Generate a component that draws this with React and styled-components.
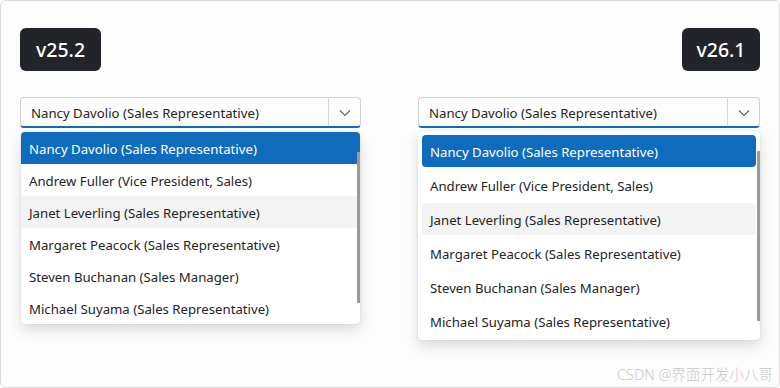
import React from 'react';
import styled, { createGlobalStyle, css } from 'styled-components';

const GlobalStyle = createGlobalStyle`
  html, body {
    margin: 0;
    padding: 0;
    background: #ffffff;
  }
  * {
    box-sizing: border-box;
  }
`;

const Frame = styled.div`
  position: relative;
  width: 780px;
  height: 388px;
  border: 1px solid #dcdcdc;
  border-radius: 6px;
  background: #fdfdfd;
  padding: 27px 19px 0;
  display: flex;
  justify-content: space-between;
  font-family: 'Noto Sans', 'Open Sans', sans-serif;
  color: #242424;
`;

const Column = styled.div`
  width: ${(p) => p.width}px;
  display: flex;
  flex-direction: column;
  align-items: ${(p) => (p.right ? 'flex-end' : 'flex-start')};
`;

const Badge = styled.div`
  height: 43px;
  padding: 0 ${(p) => p.pad}px;
  display: flex;
  align-items: center;
  border-radius: 6px;
  background: #212429;
  color: #ffffff;
  font-size: 19.5px;
  font-weight: 500;
  margin-bottom: 26px;
`;

const Select = styled.div`
  width: 100%;
  height: 31px;
  display: flex;
  border: 1px solid #d1d1d1;
  border-bottom: 2px solid #0f6cbd;
  border-radius: 4px;
  background: #fdfdfd;
`;

const SelectText = styled.div`
  flex: 1;
  display: flex;
  align-items: center;
  padding: 2px 0 0 10px;
  font-size: 13.2px;
`;

const Chevron = styled.div`
  width: 32px;
  border-left: 1px solid #d6d6d6;
  display: flex;
  align-items: center;
  justify-content: center;
  padding-top: 1px;
  color: #616161;
`;

const Panel = styled.div`
  position: relative;
  background: #ffffff;
  border-radius: 4px;
  box-shadow: 0 6px 14px rgba(0, 0, 0, 0.14), 0 0 2px rgba(0, 0, 0, 0.12);
  ${(p) =>
    p.modern
      ? css`
          width: 100%;
          margin-top: 3px;
          padding: 4px 4px 3px;
          display: flex;
          flex-direction: column;
          gap: 2px;
        `
      : css`
          width: calc(100% - 2px);
          margin: 4px 1px 0;
          overflow: hidden;
        `}
`;

const Item = styled.div`
  height: 32px;
  display: flex;
  align-items: center;
  padding: 1px 0 0 8px;
  font-size: 13.2px;
  color: #242424;
  ${(p) => p.modern && 'border-radius: 4px;'}
  ${(p) => p.hover && 'background: #f3f3f3;'}
  ${(p) =>
    p.selected &&
    css`
      background: #0f6cbd;
      color: #ffffff;
    `}
`;

const Thumb = styled.div`
  position: absolute;
  right: 0;
  width: 3px;
  top: ${(p) => p.top}px;
  height: ${(p) => p.size}px;
  background: #9a9a9a;
`;

const Watermark = styled.div`
  position: absolute;
  right: 6px;
  bottom: 3px;
  font-size: 14.5px;
  color: #c8c8c8;
  font-family: 'Noto Sans', 'Noto Sans CJK SC', sans-serif;
  font-weight: 300;
`;

const people = [
  'Nancy Davolio (Sales Representative)',
  'Andrew Fuller (Vice President, Sales)',
  'Janet Leverling (Sales Representative)',
  'Margaret Peacock (Sales Representative)',
  'Steven Buchanan (Sales Manager)',
  'Michael Suyama (Sales Representative)',
];

const ChevronIcon = () => (
  <svg width="12" height="8" viewBox="0 0 12 8" fill="none">
    <path d="M1 1.5 L6 6.5 L11 1.5" stroke="currentColor" strokeWidth="1.1" />
  </svg>
);

const ComboBox = ({ modern }) => (
  <>
    <Select>
      <SelectText>{people[0]}</SelectText>
      <Chevron>
        <ChevronIcon />
      </Chevron>
    </Select>
    <Panel modern={modern}>
      {people.map((name, i) => (
        <Item key={name} modern={modern} selected={i === 0} hover={i === 2}>
          {name}
        </Item>
      ))}
      {modern ? <Thumb top={20} size={170} /> : <Thumb top={20} size={151} />}
    </Panel>
  </>
);

export default function App() {
  return (
    <>
      <GlobalStyle />
      <Frame>
        <Column width={341}>
          <Badge pad={16}>v25.2</Badge>
          <ComboBox />
        </Column>
        <Column width={342} right>
          <Badge pad={14.5}>v26.1</Badge>
          <ComboBox modern />
        </Column>
        <Watermark>CSDN @界面开发小八哥</Watermark>
      </Frame>
    </>
  );
}
